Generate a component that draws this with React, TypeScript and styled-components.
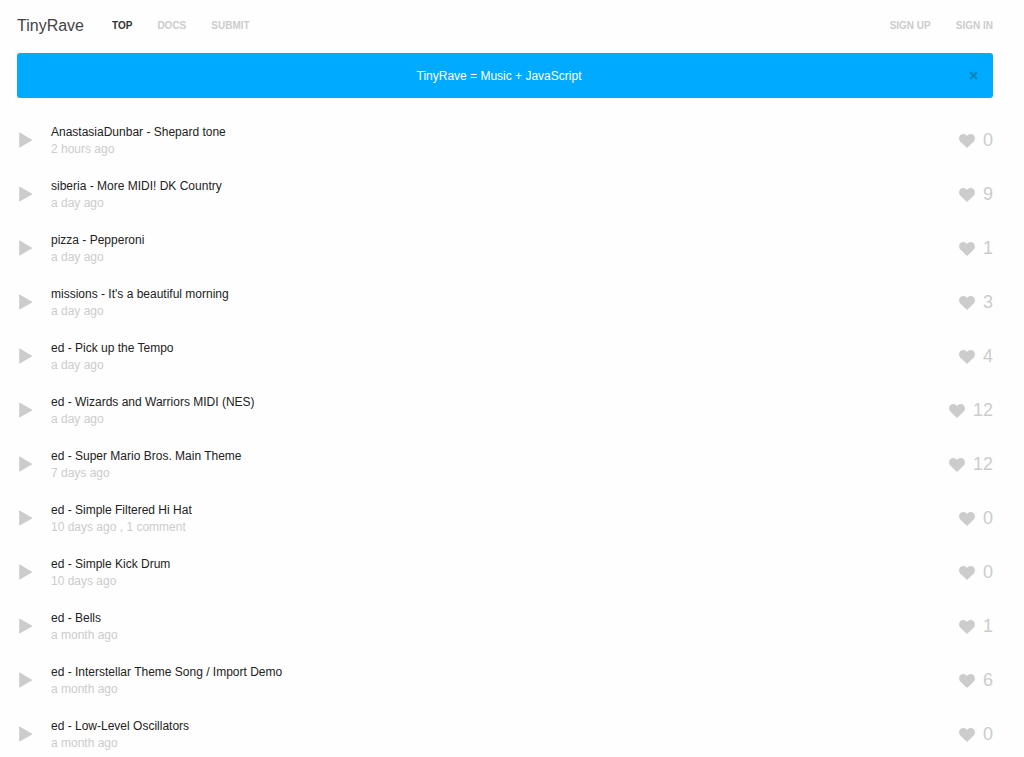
import React, { useState } from "react";
import styled, { createGlobalStyle } from "styled-components";

const GlobalStyle = createGlobalStyle`
  * { box-sizing: border-box; }
  body {
    margin: 0;
    background: #fefefe;
    color: #222;
    font-family: "Liberation Sans", Arial, sans-serif;
    font-size: 12px;
    line-height: 17px;
  }
  button {
    display: flex;
    padding: 0;
    border: 0;
    background: none;
    font: inherit;
    cursor: pointer;
  }
  a { color: inherit; text-decoration: none; }
`;

const Page = styled.div`
  padding: 0 31px 0 17px;
`;

const Header = styled.header`
  display: flex;
  align-items: center;
  justify-content: space-between;
  height: 53px;
  padding-bottom: 2px;
`;

const Nav = styled.nav`
  display: flex;
  align-items: center;
  gap: 25px;
`;

const Brand = styled.a`
  margin-right: 3px;
  color: #444;
  font-size: 16px;
`;

const NavLink = styled.a<{ $active?: boolean }>`
  color: ${({ $active }) => ($active ? "#333" : "#ccc")};
  font-size: 10px;
  font-weight: bold;
`;

const Banner = styled.div`
  display: flex;
  align-items: center;
  height: 45px;
  padding: 0 15px 0 24px;
  border-radius: 3px;
  background: #00aaff;
  color: #fff;
`;

const BannerText = styled.p`
  flex: 1;
  margin: 0;
  padding: 2px 12px 0 0;
  text-align: center;
`;

const CloseButton = styled.button`
  color: #0c86bf;
`;

const TrackList = styled.ul`
  margin: 0;
  padding: 15px 0 0;
  list-style: none;
`;

const Track = styled.li`
  display: flex;
  align-items: center;
  height: 54px;
`;

const PlayButton = styled.button`
  width: 34px;
  padding-left: 2px;
  color: #ccc;
`;

const TrackInfo = styled.div`
  flex: 1;
  padding-top: 2px;
`;

const TrackTitle = styled.a`
  display: block;
`;

const TrackMeta = styled.div`
  color: #ccc;
`;

const LikeButton = styled.button`
  align-items: center;
  gap: 8px;
  color: #ccc;
  font-size: 18px;
`;

const tracks = [
  { title: "AnastasiaDunbar - Shepard tone", meta: "2 hours ago", likes: 0 },
  { title: "siberia - More MIDI! DK Country", meta: "a day ago", likes: 9 },
  { title: "pizza - Pepperoni", meta: "a day ago", likes: 1 },
  { title: "missions - It's a beautiful morning", meta: "a day ago", likes: 3 },
  { title: "ed - Pick up the Tempo", meta: "a day ago", likes: 4 },
  { title: "ed - Wizards and Warriors MIDI (NES)", meta: "a day ago", likes: 12 },
  { title: "ed - Super Mario Bros. Main Theme", meta: "7 days ago", likes: 12 },
  { title: "ed - Simple Filtered Hi Hat", meta: "10 days ago , 1 comment", likes: 0 },
  { title: "ed - Simple Kick Drum", meta: "10 days ago", likes: 0 },
  { title: "ed - Bells", meta: "a month ago", likes: 1 },
  { title: "ed - Interstellar Theme Song / Import Demo", meta: "a month ago", likes: 6 },
  { title: "ed - Low-Level Oscillators", meta: "a month ago", likes: 0 },
];

const PlayIcon = () => (
  <svg width="14" height="16" viewBox="0 0 14 16" fill="currentColor" aria-hidden="true">
    <path d="M.2.9v14.4c0 .4.2.5.5.3L13 8.500c.3-.2.3-.5 0-.7L.7.6C.4.4.2.5.2.9z" />
  </svg>
);

const HeartIcon = () => (
  <svg width="16" height="16" viewBox="0 0 16 16" fill="currentColor" aria-hidden="true">
    <path d="M8 16 1.8 10.1C.9 9.2.1 8 .1 6.4.1 3.7 1.8 2 4.4 2 6 2 7.3 3 8 3.9 8.7 3 10 2 11.6 2c2.6 0 4.3 1.7 4.3 4.4 0 1.6-.8 2.8-1.7 3.7z" />
  </svg>
);

const CloseIcon = () => (
  <svg width="9" height="9" viewBox="0 0 9 9" stroke="currentColor" strokeWidth="2.2" aria-hidden="true">
    <path d="M1 1l7 7M8 1L1 8" />
  </svg>
);

export default function App() {
  const [bannerOpen, setBannerOpen] = useState(true);
  return (
    <>
      <GlobalStyle />
      <Page>
        <Header>
          <Nav>
            <Brand href="#">TinyRave</Brand>
            <NavLink href="#top" $active>TOP</NavLink>
            <NavLink href="#docs">DOCS</NavLink>
            <NavLink href="#submit">SUBMIT</NavLink>
          </Nav>
          <Nav>
            <NavLink href="#sign-up">SIGN UP</NavLink>
            <NavLink href="#sign-in">SIGN IN</NavLink>
          </Nav>
        </Header>
        {bannerOpen && (
          <Banner>
            <BannerText>TinyRave = Music + JavaScript</BannerText>
            <CloseButton aria-label="Close" onClick={() => setBannerOpen(false)}>
              <CloseIcon />
            </CloseButton>
          </Banner>
        )}
        <TrackList>
          {tracks.map(({ title, meta, likes }) => (
            <Track key={title}>
              <PlayButton aria-label={`Play ${title}`}>
                <PlayIcon />
              </PlayButton>
              <TrackInfo>
                <TrackTitle href="#track">{title}</TrackTitle>
                <TrackMeta>{meta}</TrackMeta>
              </TrackInfo>
              <LikeButton>
                <HeartIcon />
                {likes}
              </LikeButton>
            </Track>
          ))}
        </TrackList>
      </Page>
    </>
  );
}
